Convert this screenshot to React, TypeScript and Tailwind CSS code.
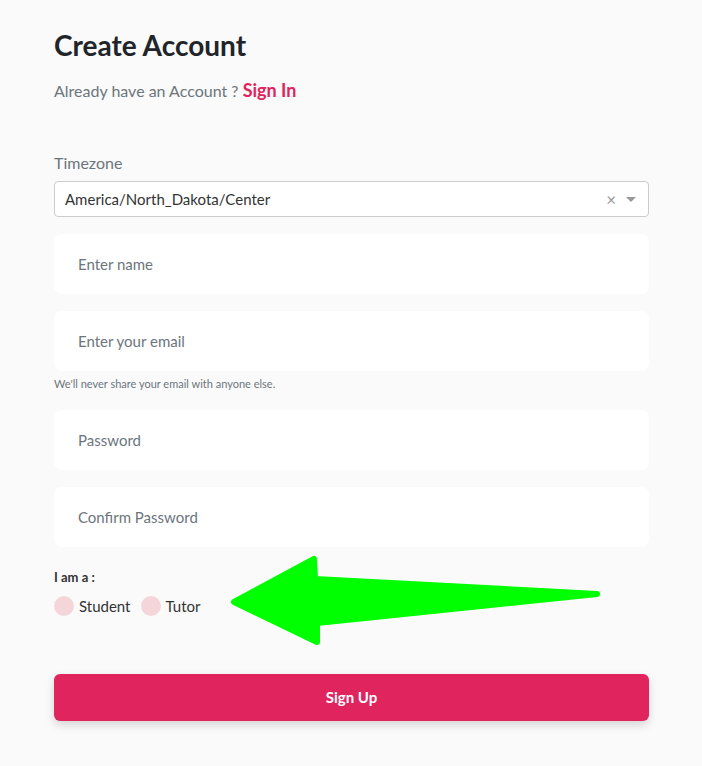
import { useState } from 'react';

export default function App() {
  const [role, setRole] = useState('');

  return (
    <div className="min-h-[766px] bg-[#fafafa] font-['Lato',sans-serif] text-[#222]">
      <div className="relative w-[595px] ml-[54px] pt-[28px] pb-[44px]">
        <h1 className="text-[28px] leading-[34px] font-bold text-[#212529]">Create Account</h1>
        <p className="mt-[17px] text-[16px] leading-[22px] text-[#6c757d]">
          Already have an Account ? <a className="text-[18px] font-bold text-[#e0245e]">Sign In</a>
        </p>

        <label className="block mt-[51px] text-[16px] leading-[20px] text-[#6c757d]">Timezone</label>
        <div className="mt-[8px] h-[36px] border border-[#ccc] rounded-[4px] bg-white flex items-center pl-[10px] pr-[12px]">
          <span className="flex-1 text-[15px] text-[#333]">America/North_Dakota/Center</span>
          <span className="text-[#999] text-[17px] leading-none mr-[10px]">×</span>
          <span className="w-0 h-0 border-l-[5px] border-r-[5px] border-t-[5px] border-l-transparent border-r-transparent border-t-[#999]"></span>
        </div>

        <input placeholder="Enter name" className="mt-[17px] block w-full h-[60px] rounded-[8px] bg-white px-[24px] text-[15px] placeholder:text-[#6c757d] outline-none" />
        <input placeholder="Enter your email" className="mt-[17px] block w-full h-[60px] rounded-[8px] bg-white px-[24px] text-[15px] placeholder:text-[#6c757d] outline-none" />
        <p className="mt-[6px] text-[11px] leading-[13px] text-[#6c757d]">We'll never share your email with anyone else.</p>
        <input type="password" placeholder="Password" className="mt-[20px] block w-full h-[60px] rounded-[8px] bg-white px-[24px] text-[15px] placeholder:text-[#6c757d] outline-none" />
        <input type="password" placeholder="Confirm Password" className="mt-[17px] block w-full h-[60px] rounded-[8px] bg-white px-[24px] text-[15px] placeholder:text-[#6c757d] outline-none" />

        <p className="mt-[22px] text-[13px] leading-[17px] font-bold text-[#333]">I am a :</p>
        <div className="mt-[9px] flex items-center gap-[10px] text-[15px] text-[#333]">
          {['Student', 'Tutor'].map((r) => (
            <label key={r} className="flex items-center gap-[5px] cursor-pointer" onClick={() => setRole(r)}>
              <span className={'w-[20px] h-[20px] rounded-full ' + (role === r ? 'bg-[#e0245e]' : 'bg-[#f4d6da]')}></span>
              {r}
            </label>
          ))}
        </div>

        <svg className="absolute left-[125px] top-[531px]" width="440" height="120" viewBox="0 0 440 120">
          <polygon
            points="55,71 135,28 136,48 418,63 138,92 138,111"
            fill="#00ff00"
            stroke="#00ff00"
            strokeWidth="6"
            strokeLinejoin="round"
          />
        </svg>

        <button className="mt-[56px] w-full h-[47px] rounded-[6px] bg-[#e0245e] text-white text-[15px] font-bold shadow-[0_4px_10px_rgba(0,0,0,0.15)]">
          Sign Up
        </button>
      </div>
    </div>
  );
}
